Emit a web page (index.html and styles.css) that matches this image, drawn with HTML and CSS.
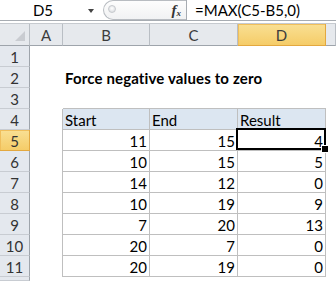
FILE: index.html
```html
<!DOCTYPE html>
<html lang="en">
<head>
  <meta charset="UTF-8" />
  <title>Force negative values to zero</title>
  <link rel="stylesheet" href="styles.css">
</head>
<body>
  <!-- Formula bar -->
  <div class="formula-bar">
    <div class="name-box">D5</div>
    <div class="drop"><span class="arrow"></span></div>
    <div class="fx-pill">
      <span class="knob"></span>
      <span class="fx"><i>f</i><sub>x</sub></span>
    </div>
    <div class="formula">=MAX(C5-B5,0)</div>
  </div>
  <div class="bar-gap"></div>

  <!-- Sheet -->
  <div class="sheet">
    <div class="c corner"><span class="tri"></span></div>
    <div class="c ch">A</div>
    <div class="c ch">B</div>
    <div class="c ch">C</div>
    <div class="c ch sel">D</div>
    <div class="c ch"></div>

    <div class="c rh">1</div>
    <div class="c"></div><div class="c"></div><div class="c"></div><div class="c"></div><div class="c"></div>

    <div class="c rh">2</div>
    <div class="c"></div>
    <div class="c title">Force negative values to zero</div>
    <div class="c"></div><div class="c"></div><div class="c"></div>

    <div class="c rh">3</div>
    <div class="c"></div>
    <div class="c tt"></div><div class="c tt"></div><div class="c tt"></div>
    <div class="c"></div>

    <div class="c rh">4</div>
    <div class="c tl"></div>
    <div class="c th">Start</div>
    <div class="c th">End</div>
    <div class="c th">Result</div>
    <div class="c"></div>

    <div class="c rh sel">5</div>
    <div class="c tl"></div>
    <div class="c td num">11</div>
    <div class="c td num">15</div>
    <div class="c td num active">4</div>
    <div class="c"></div>

    <div class="c rh">6</div>
    <div class="c tl"></div>
    <div class="c td num">10</div>
    <div class="c td num">15</div>
    <div class="c td num">5</div>
    <div class="c"></div>

    <div class="c rh">7</div>
    <div class="c tl"></div>
    <div class="c td num">14</div>
    <div class="c td num">12</div>
    <div class="c td num">0</div>
    <div class="c"></div>

    <div class="c rh">8</div>
    <div class="c tl"></div>
    <div class="c td num">10</div>
    <div class="c td num">19</div>
    <div class="c td num">9</div>
    <div class="c"></div>

    <div class="c rh">9</div>
    <div class="c tl"></div>
    <div class="c td num">7</div>
    <div class="c td num">20</div>
    <div class="c td num">13</div>
    <div class="c"></div>

    <div class="c rh">10</div>
    <div class="c tl"></div>
    <div class="c td num">20</div>
    <div class="c td num">7</div>
    <div class="c td num">0</div>
    <div class="c"></div>

    <div class="c rh">11</div>
    <div class="c tl"></div>
    <div class="c td num">20</div>
    <div class="c td num">19</div>
    <div class="c td num">0</div>
    <div class="c"></div>

    <!-- row 12, only its top sliver is visible -->
    <div class="c rh"></div>
    <div class="c"></div><div class="c"></div><div class="c"></div><div class="c"></div><div class="c"></div>
  </div>
</body>
</html>
```

FILE: styles.css
```css
* {
  margin: 0;
  padding: 0;
  box-sizing: border-box;
}

body {
  font-family: Lato, "Liberation Sans", sans-serif;
  font-size: 15px;
  color: #000;
  background: #fff;
  width: 336px;
  height: 281px;
  overflow: hidden;
}

/* Formula bar */
.formula-bar {
  display: flex;
  height: 21px;
  border-bottom: 1px solid #a7acb2;
}

.name-box {
  width: 84px;
  display: flex;
  align-items: center;
  justify-content: center;
  padding-left: 2px;
}

.drop {
  width: 19px;
  display: flex;
  align-items: center;
  padding-left: 4px;
}

.arrow {
  width: 0;
  height: 0;
  border-left: 3px solid transparent;
  border-right: 3px solid transparent;
  border-top: 4px solid #444;
  margin-top: 2px;
}

.fx-pill {
  position: relative;
  width: 83px;
  height: 20px;
  border: 1px solid #b8bcc1;
  border-right: none;
  border-radius: 10px 0 0 10px;
  background: linear-gradient(#fdfdfd, #f1f2f3);
  display: flex;
  align-items: center;
  justify-content: flex-end;
  padding-right: 5px;
}

.knob {
  position: absolute;
  left: 4px;
  top: 4px;
  width: 8px;
  height: 8px;
  border-radius: 50%;
  background: radial-gradient(circle at 50% 40%, #ffffff, #d3d6da);
  border: 1px solid #c6c9cd;
}

.fx {
  font-family: "Liberation Serif", serif;
  font-weight: bold;
  color: #333;
  font-size: 15px;
}

.fx sub {
  font-size: 9px;
  font-style: italic;
  vertical-align: -1px;
}

.formula {
  flex: 1;
  border-left: 1px solid #a7acb2;
  display: flex;
  align-items: center;
  padding-left: 8px;
}

.bar-gap {
  height: 2px;
}

/* Grid */
.sheet {
  display: grid;
  grid-template-columns: 30px 33px 87px 88px 88px 10px;
  grid-template-rows: 22px repeat(11, 21px) 4px;
  border-top: 1px solid #c6cacf;
}

.c {
  display: flex;
  align-items: center;
  padding: 1px 2px 0;
  white-space: nowrap;
}

.corner {
  position: relative;
  background: #e6e9ed;
  border-right: 1px solid #b9bec4;
  border-bottom: 1px solid #9ea4ab;
}

.tri {
  position: absolute;
  right: 4px;
  bottom: 4px;
  width: 0;
  height: 0;
  border-left: 10px solid transparent;
  border-bottom: 10px solid #c9ccd1;
}

.ch {
  justify-content: center;
  background: #e6e9ed;
  color: #3c3c3c;
  border-right: 1px solid #b9bec4;
  border-bottom: 1px solid #9ea4ab;
}

.rh {
  justify-content: center;
  background: #e4e8ee;
  color: #333;
  border-right: 1px solid #9ea4ab;
  border-bottom: 1px solid #c8ccd2;
}

.ch.sel,
.rh.sel {
  background: linear-gradient(#f9e094, #f5cc68);
  border-color: #e3a83f;
  box-shadow: inset 1px 1px 0 #f0bf5c;
}

.title {
  font-weight: bold;
  letter-spacing: 0.14px;
  overflow: visible;
}

/* Table B4:D11 */
.tt {
  border-bottom: 1px solid #bfbfbf;
}

.tl {
  border-right: 1px solid #bfbfbf;
}

.th,
.td {
  border-right: 1px solid #bfbfbf;
  border-bottom: 1px solid #bfbfbf;
}

.th {
  background: #dce6f1;
}

.num {
  justify-content: flex-end;
  padding-right: 2px;
}

.active {
  position: relative;
}

.active::after {
  content: "";
  position: absolute;
  left: -2px;
  top: -2px;
  right: -1px;
  bottom: 0;
  border: 2px solid #000;
}

.active::before {
  content: "";
  position: absolute;
  right: -4px;
  bottom: -3px;
  width: 6px;
  height: 6px;
  background: #000;
  border: 1px solid #fff;
  z-index: 1;
}
```
